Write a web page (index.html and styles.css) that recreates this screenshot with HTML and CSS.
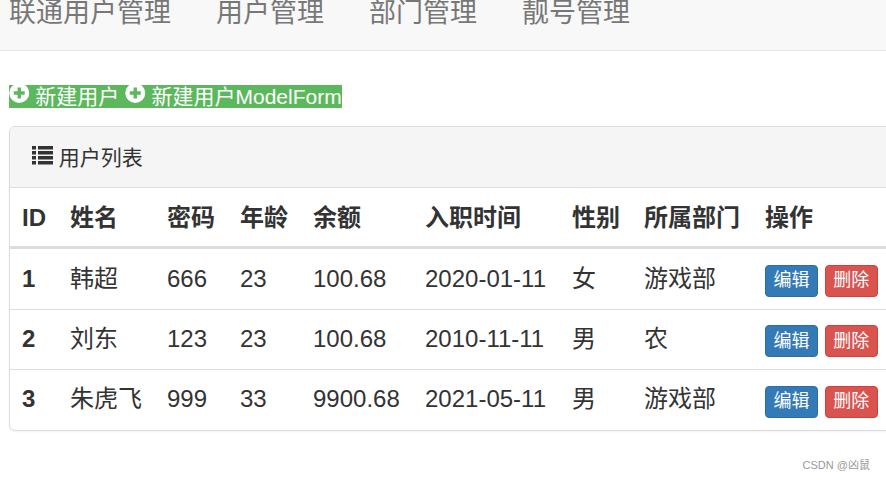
FILE: index.html
```html
<!DOCTYPE html>
<html lang="zh">
<head>
    <meta charset="UTF-8">
    <title>用户列表</title>
    <link rel="stylesheet" href="styles.css">
</head>
<body>
    <nav class="navbar">
        <ul class="nav-menu">
            <li><a href="#">联通用户管理</a></li>
            <li><a href="#">用户管理</a></li>
            <li><a href="#">部门管理</a></li>
            <li><a href="#">靓号管理</a></li>
        </ul>
    </nav>

    <div class="container">
        <div class="add-row">
            <a href="#" class="add-link"><svg class="icon-plus" viewBox="0 0 20 20"><path fill-rule="evenodd" d="M10 0a10 10 0 1 0 0 20a10 10 0 1 0 0-20zM8.300 4.500h3.400V8.300h3.800v3.400H11.700v3.800H8.300V11.700H4.500V8.300H8.300z"/></svg> 新建用户 <svg class="icon-plus" viewBox="0 0 20 20"><path fill-rule="evenodd" d="M10 0a10 10 0 1 0 0 20a10 10 0 1 0 0-20zM8.300 4.500h3.400V8.300h3.800v3.400H11.700v3.800H8.300V11.700H4.500V8.300H8.300z"/></svg> 新建用户ModelForm</a>
        </div>

        <div class="panel">
            <div class="panel-heading">
                <svg class="icon-list" viewBox="0 0 21 20"><path d="M0 1h4v3.500H0zM6 1h15v3.500H6zM0 6h4v3.500H0zM6 6h15v3.500H6zM0 11h4v3.500H0zM6 11h15v3.500H6zM0 16h4v3.500H0zM6 16h15v3.500H6z"/></svg>
                用户列表
            </div>
            <table class="table">
                <colgroup>
                    <col class="col-id">
                    <col class="col-name">
                    <col class="col-short">
                    <col class="col-short">
                    <col class="col-money">
                    <col class="col-date">
                    <col class="col-gender">
                    <col class="col-depart">
                    <col class="col-action">
                </colgroup>
                <thead>
                    <tr>
                        <th>ID</th><th>姓名</th><th>密码</th><th>年龄</th><th>余额</th><th>入职时间</th><th>性别</th><th>所属部门</th><th>操作</th>
                    </tr>
                </thead>
                <tbody>
                    <tr>
                        <th>1</th><td>韩超</td><td>666</td><td>23</td><td>100.68</td><td>2020-01-11</td><td>女</td><td>游戏部</td>
                        <td class="actions"><a href="#" class="btn btn-edit">编辑</a> <a href="#" class="btn btn-del">删除</a></td>
                    </tr>
                    <tr>
                        <th>2</th><td>刘东</td><td>123</td><td>23</td><td>100.68</td><td>2010-11-11</td><td>男</td><td>农</td>
                        <td class="actions"><a href="#" class="btn btn-edit">编辑</a> <a href="#" class="btn btn-del">删除</a></td>
                    </tr>
                    <tr>
                        <th>3</th><td>朱虎飞</td><td>999</td><td>33</td><td>9900.68</td><td>2021-05-11</td><td>男</td><td>游戏部</td>
                        <td class="actions"><a href="#" class="btn btn-edit">编辑</a> <a href="#" class="btn btn-del">删除</a></td>
                    </tr>
                </tbody>
            </table>
        </div>
    </div>

    <div class="watermark">CSDN @凶鼠</div>
</body>
</html>
```

FILE: styles.css
```css
html, body {
    height: 100%;
}

body {
    margin: 0;
    overflow: hidden;
    background-color: #fff;
    color: #333;
    font-family: "Liberation Sans", "Noto Sans CJK SC", sans-serif;
}

a {
    text-decoration: none;
}

/* Navbar, top of the text is cut off by the window */
.navbar {
    height: 50px;
    overflow: hidden;
    background-color: #f8f8f8;
    border-bottom: 1px solid #e7e7e7;
}

.nav-menu {
    display: flex;
    gap: 45px;
    list-style-type: none;
    margin: -6px 0 0;
    padding: 0 0 0 9px;
}

.nav-menu a {
    color: #777;
    font-size: 27px;
    line-height: 38px;
}

/* Add links */
.container {
    width: 920px;
    padding-left: 9px;
}

.add-row {
    margin-top: 31px;
    height: 44px;
    font-size: 21px;
    line-height: 30px;
}

.add-link {
    color: #fff;
    background-color: #5cb85c;
}

.icon-plus {
    width: 20.5px;
    height: 20px;
    fill: #fff;
    vertical-align: 1px;
}

/* Panel */
.panel {
    background-color: #fff;
    border: 1px solid #ddd;
    border-radius: 6px;
    box-shadow: 0 1px 2px rgba(0, 0, 0, 0.05);
}

.panel-heading {
    padding: 16px 22px 14px;
    font-size: 21px;
    line-height: 30px;
    background-color: #f5f5f5;
    border-bottom: 1px solid #ddd;
    border-radius: 5px 5px 0 0;
}

.icon-list {
    width: 21px;
    height: 20px;
    fill: #333;
    vertical-align: 0;
}

/* Table */
.table {
    table-layout: fixed;
    width: 880px;
    border-collapse: collapse;
    border-spacing: 0;
    font-size: 24px;
    line-height: 34px;
}

.col-id { width: 48px; }
.col-name { width: 97px; }
.col-short { width: 73px; }
.col-money { width: 112px; }
.col-date { width: 147px; }
.col-gender { width: 72px; }
.col-depart { width: 121px; }
.col-action { width: 137px; }

.table th,
.table td {
    padding: 12px;
    text-align: left;
    vertical-align: top;
    white-space: nowrap;
}

.table thead th {
    padding-top: 13px;
    padding-bottom: 11px;
}

.table thead tr {
    border-bottom: 3px solid #ddd;
}

.table tbody tr {
    height: 60px;
    border-top: 1px solid #ddd;
}

.table tbody tr:first-child {
    border-top: 0;
}

.table tbody tr:first-child th,
.table tbody tr:first-child td,
.table td.actions {
    padding-top: 13px;
}

.btn {
    display: inline-block;
    padding: 1.5px 7.5px;
    color: #fff;
    font-size: 18px;
    line-height: 27px;
    border: 1px solid;
    border-radius: 4px;
    vertical-align: middle;
}

.btn-edit {
    background-color: #337ab7;
    border-color: #2e6da4;
}

.btn-del {
    background-color: #d9534f;
    border-color: #d43f3a;
}

.watermark {
    position: absolute;
    right: 16px;
    top: 458px;
    color: #999;
    font-size: 11px;
    line-height: 14px;
}
```
